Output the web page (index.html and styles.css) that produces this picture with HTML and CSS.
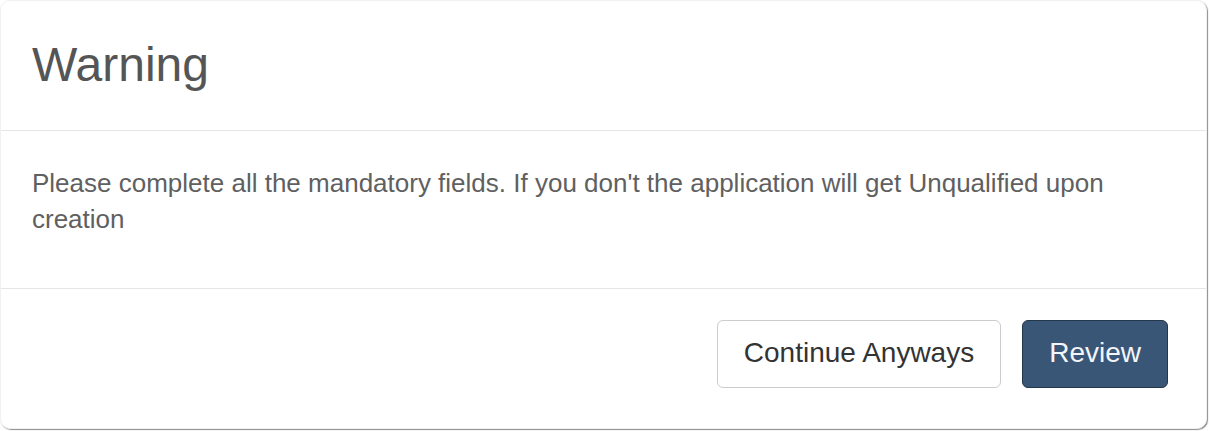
FILE: index.html
```html
<!DOCTYPE html>
<html>
<head>
<meta charset="utf-8">
<link rel="stylesheet" href="styles.css">
</head>
<body>
<div class="modal">
  <div class="modal-header">
    <h4 class="modal-title">Warning</h4>
  </div>
  <div class="modal-body">
    <p>Please complete all the mandatory fields. If you don't the application will get Unqualified upon creation</p>
  </div>
  <div class="modal-footer">
    <button class="btn btn-default">Continue Anyways</button>
    <button class="btn btn-primary">Review</button>
  </div>
</div>
</body>
</html>
```
FILE: styles.css
```css
html, body {
  margin: 0;
  padding: 0;
  background: #ffffff;
}
body {
  font-family: "Liberation Sans", Arial, sans-serif;
  width: 1210px;
  height: 431px;
  overflow: hidden;
}
.modal {
  width: 1207px;
  height: 429px;
  box-sizing: border-box;
  border: 1px solid #f1f1f1;
  border-radius: 10px;
  box-shadow: 1px 1px 1px rgba(0, 0, 0, 0.45);
  background: #fff;
  display: flex;
  flex-direction: column;
  overflow: hidden;
}
.modal-header {
  height: 91px;
  border-bottom: 1px solid #e6e6e6;
  padding: 38px 31px 0;
  box-sizing: content-box;
}
.modal-title {
  margin: 0;
  font-size: 48px;
  font-weight: normal;
  line-height: 1.1;
  color: #555;
}
.modal-body {
  height: 123px;
  padding: 34px 60px 0 31px;
  border-bottom: 1px solid #e6e6e6;
}
.modal-body p {
  margin: 0;
  font-size: 26px;
  line-height: 36px;
  color: #606060;
}
.modal-footer {
  flex: 1;
  display: flex;
  justify-content: flex-end;
  align-items: flex-start;
  gap: 21px;
  padding: 31px 38px 0 0;
}
.btn {
  font-family: "Liberation Sans", Arial, sans-serif;
  font-size: 28px;
  line-height: 40px;
  padding: 12px 26px 14px;
  border-radius: 6px;
  border: 1px solid #ccc;
  background: #fff;
  color: #333;
  margin: 0;
}
.btn-primary {
  background: #3a5676;
  border-color: #24364a;
  color: #f2f5fa;
}
```
